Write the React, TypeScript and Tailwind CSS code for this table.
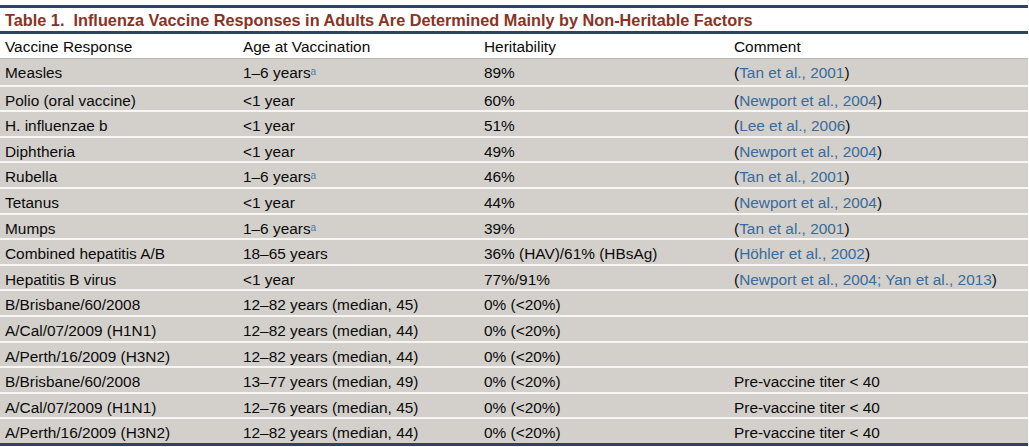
const rows: { name: string; age: string; sup?: boolean; her: string; comment?: string; cite?: boolean }[] = [
  { name: 'Measles', age: '1–6 years', sup: true, her: '89%', comment: 'Tan et al., 2001', cite: true },
  { name: 'Polio (oral vaccine)', age: '<1 year', her: '60%', comment: 'Newport et al., 2004', cite: true },
  { name: 'H. influenzae b', age: '<1 year', her: '51%', comment: 'Lee et al., 2006', cite: true },
  { name: 'Diphtheria', age: '<1 year', her: '49%', comment: 'Newport et al., 2004', cite: true },
  { name: 'Rubella', age: '1–6 years', sup: true, her: '46%', comment: 'Tan et al., 2001', cite: true },
  { name: 'Tetanus', age: '<1 year', her: '44%', comment: 'Newport et al., 2004', cite: true },
  { name: 'Mumps', age: '1–6 years', sup: true, her: '39%', comment: 'Tan et al., 2001', cite: true },
  { name: 'Combined hepatitis A/B', age: '18–65 years', her: '36% (HAV)/61% (HBsAg)', comment: 'Höhler et al., 2002', cite: true },
  { name: 'Hepatitis B virus', age: '<1 year', her: '77%/91%', comment: 'Newport et al., 2004; Yan et al., 2013', cite: true },
  { name: 'B/Brisbane/60/2008', age: '12–82 years (median, 45)', her: '0% (<20%)' },
  { name: 'A/Cal/07/2009 (H1N1)', age: '12–82 years (median, 44)', her: '0% (<20%)' },
  { name: 'A/Perth/16/2009 (H3N2)', age: '12–82 years (median, 44)', her: '0% (<20%)' },
  { name: 'B/Brisbane/60/2008', age: '13–77 years (median, 49)', her: '0% (<20%)', comment: 'Pre-vaccine titer < 40' },
  { name: 'A/Cal/07/2009 (H1N1)', age: '12–76 years (median, 45)', her: '0% (<20%)', comment: 'Pre-vaccine titer < 40' },
  { name: 'A/Perth/16/2009 (H3N2)', age: '12–82 years (median, 44)', her: '0% (<20%)', comment: 'Pre-vaccine titer < 40' },
]

export default function App() {
  return (
    <div className="bg-white w-[1029px] h-[447px] pt-[5px] font-['Liberation_Sans',Arial,sans-serif] text-[15.4px] text-[#0a0a0a]">
      <div className="w-[1028px] border-t-[3px] border-[#2c4560]">
        <div className="h-[22px] pt-[1px] border-b-[3px] border-[#2c4560] box-content pl-[5px] flex items-center text-[16.3px] font-bold text-[#8a3324] whitespace-nowrap">
          Table 1.&nbsp; Influenza Vaccine Responses in Adults Are Determined Mainly by Non-Heritable Factors
        </div>
        <div className="grid grid-cols-[238px_241px_250px_1fr] h-[25px] pt-[1px] items-center border-b border-[#b9b6b2] bg-white">
          <div className="pl-[5px]">Vaccine Response</div>
          <div className="pl-[5px]">Age at Vaccination</div>
          <div className="pl-[5px]">Heritability</div>
          <div className="pl-[5px]">Comment</div>
        </div>
        <div className="border-b-[3px] border-[#2c4560]">
          {rows.map((r, i) => (
            <div
              key={i}
              className={`grid grid-cols-[238px_241px_250px_1fr] h-[25.6px] pt-[2px] items-center bg-[#d3d0cc] whitespace-nowrap ${i > 0 ? 'border-t-2 border-[#f7f6f4]' : ''}`}
            >
              <div className="pl-[5px]">{r.name}</div>
              <div className="pl-[5px]">
                {r.age}
                {r.sup && <sup className="text-[10px] text-[#4a7aa8] relative -top-[3px]">a</sup>}
              </div>
              <div className="pl-[5px]">{r.her}</div>
              <div className="pl-[5px]">
                {r.comment &&
                  (r.cite ? (
                    <>
                      (<span className="text-[#3a6a9a]">{r.comment}</span>)
                    </>
                  ) : (
                    r.comment
                  ))}
              </div>
            </div>
          ))}
        </div>
      </div>
    </div>
  )
}
